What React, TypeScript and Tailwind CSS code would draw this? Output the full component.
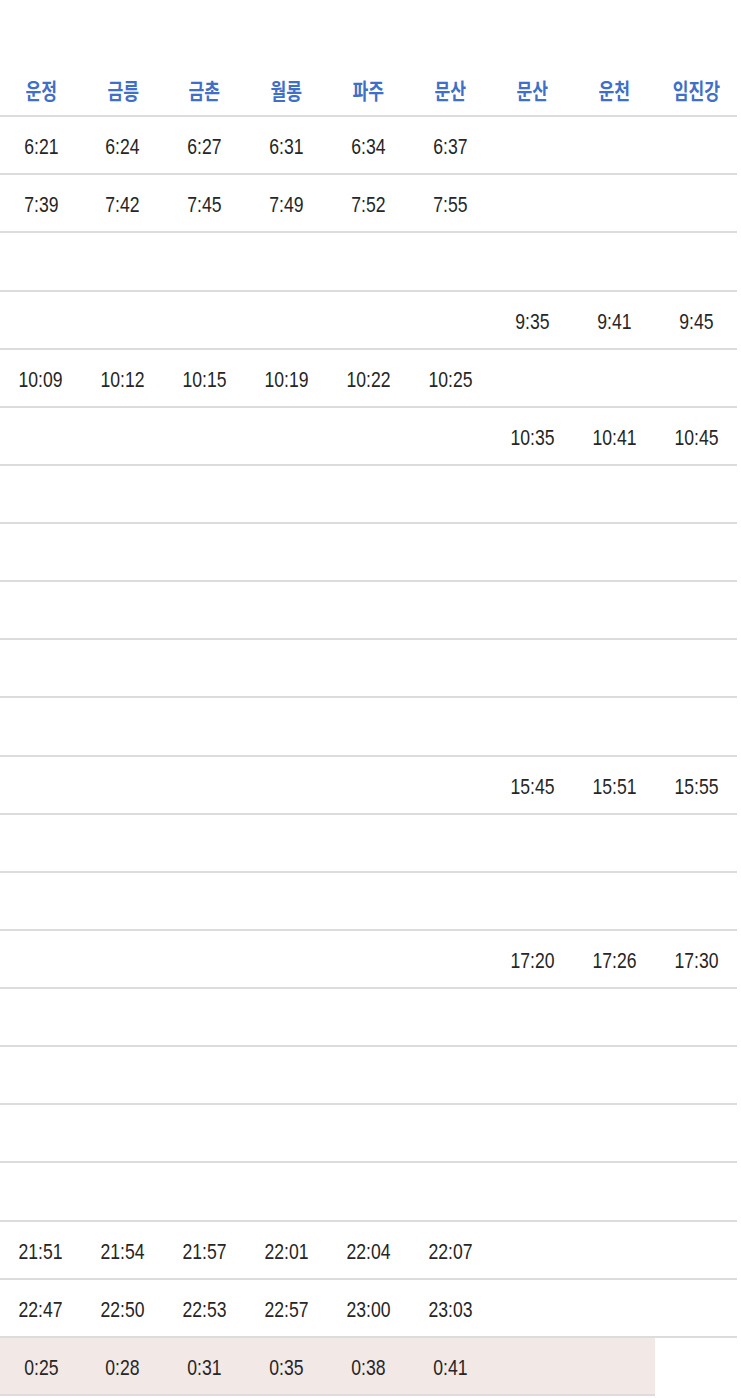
import React from 'react';

const STATIONS = ['운정', '금릉', '금촌', '월롱', '파주', '문산', '문산', '운천', '임진강'];

const E = ['', '', '', '', '', '', '', '', ''];

const ROWS: string[][] = [
  ['6:21', '6:24', '6:27', '6:31', '6:34', '6:37', '', '', ''],
  ['7:39', '7:42', '7:45', '7:49', '7:52', '7:55', '', '', ''],
  E,
  ['', '', '', '', '', '', '9:35', '9:41', '9:45'],
  ['10:09', '10:12', '10:15', '10:19', '10:22', '10:25', '', '', ''],
  ['', '', '', '', '', '', '10:35', '10:41', '10:45'],
  E,
  E,
  E,
  E,
  E,
  ['', '', '', '', '', '', '15:45', '15:51', '15:55'],
  E,
  E,
  ['', '', '', '', '', '', '17:20', '17:26', '17:30'],
  E,
  E,
  E,
  E,
  ['21:51', '21:54', '21:57', '22:01', '22:04', '22:07', '', '', ''],
  ['22:47', '22:50', '22:53', '22:57', '23:00', '23:03', '', '', ''],
];

// 막차 (마지막 행은 운천/임진강 칸 없음)
const LAST = ['0:25', '0:28', '0:31', '0:35', '0:38', '0:41', '', ''];

export default function App() {
  return (
    <div className="w-[741px] min-h-[1398px] bg-white pt-[59px] font-['Liberation_Sans',Arial,sans-serif]">
      <div className="w-[737px]">
        <div className="grid grid-cols-9 h-[58.14px] border-b-2 border-[#dcdcdc]">
          {STATIONS.map((s, i) => (
            <div key={i} className="flex items-center justify-center pt-[4px]">
              <span className="inline-block scale-x-[0.78] text-[22px] font-bold text-[#3f6fc8] font-['Noto_Sans_CJK_KR',sans-serif] leading-none whitespace-nowrap">
                {s}
              </span>
            </div>
          ))}
        </div>
        {ROWS.map((row, r) => (
          <div key={r} className="grid grid-cols-9 h-[58.14px] border-b-2 border-[#dcdcdc]">
            {row.map((t, c) => (
              <div key={c} className="flex items-center justify-center pt-[4px]">
                <span className="inline-block scale-x-[0.8] text-[22px] text-[#262626] leading-none">{t}</span>
              </div>
            ))}
          </div>
        ))}
        <div className="grid grid-cols-9 h-[58.14px]">
          {LAST.map((t, c) => (
            <div key={c} className="flex items-center justify-center pt-[5px] bg-[#f2e8e6] border-b-2 border-[#dcdcdc]">
              <span className="inline-block scale-x-[0.8] text-[22px] text-[#262626] leading-none">{t}</span>
            </div>
          ))}
          <div />
        </div>
      </div>
    </div>
  );
}
